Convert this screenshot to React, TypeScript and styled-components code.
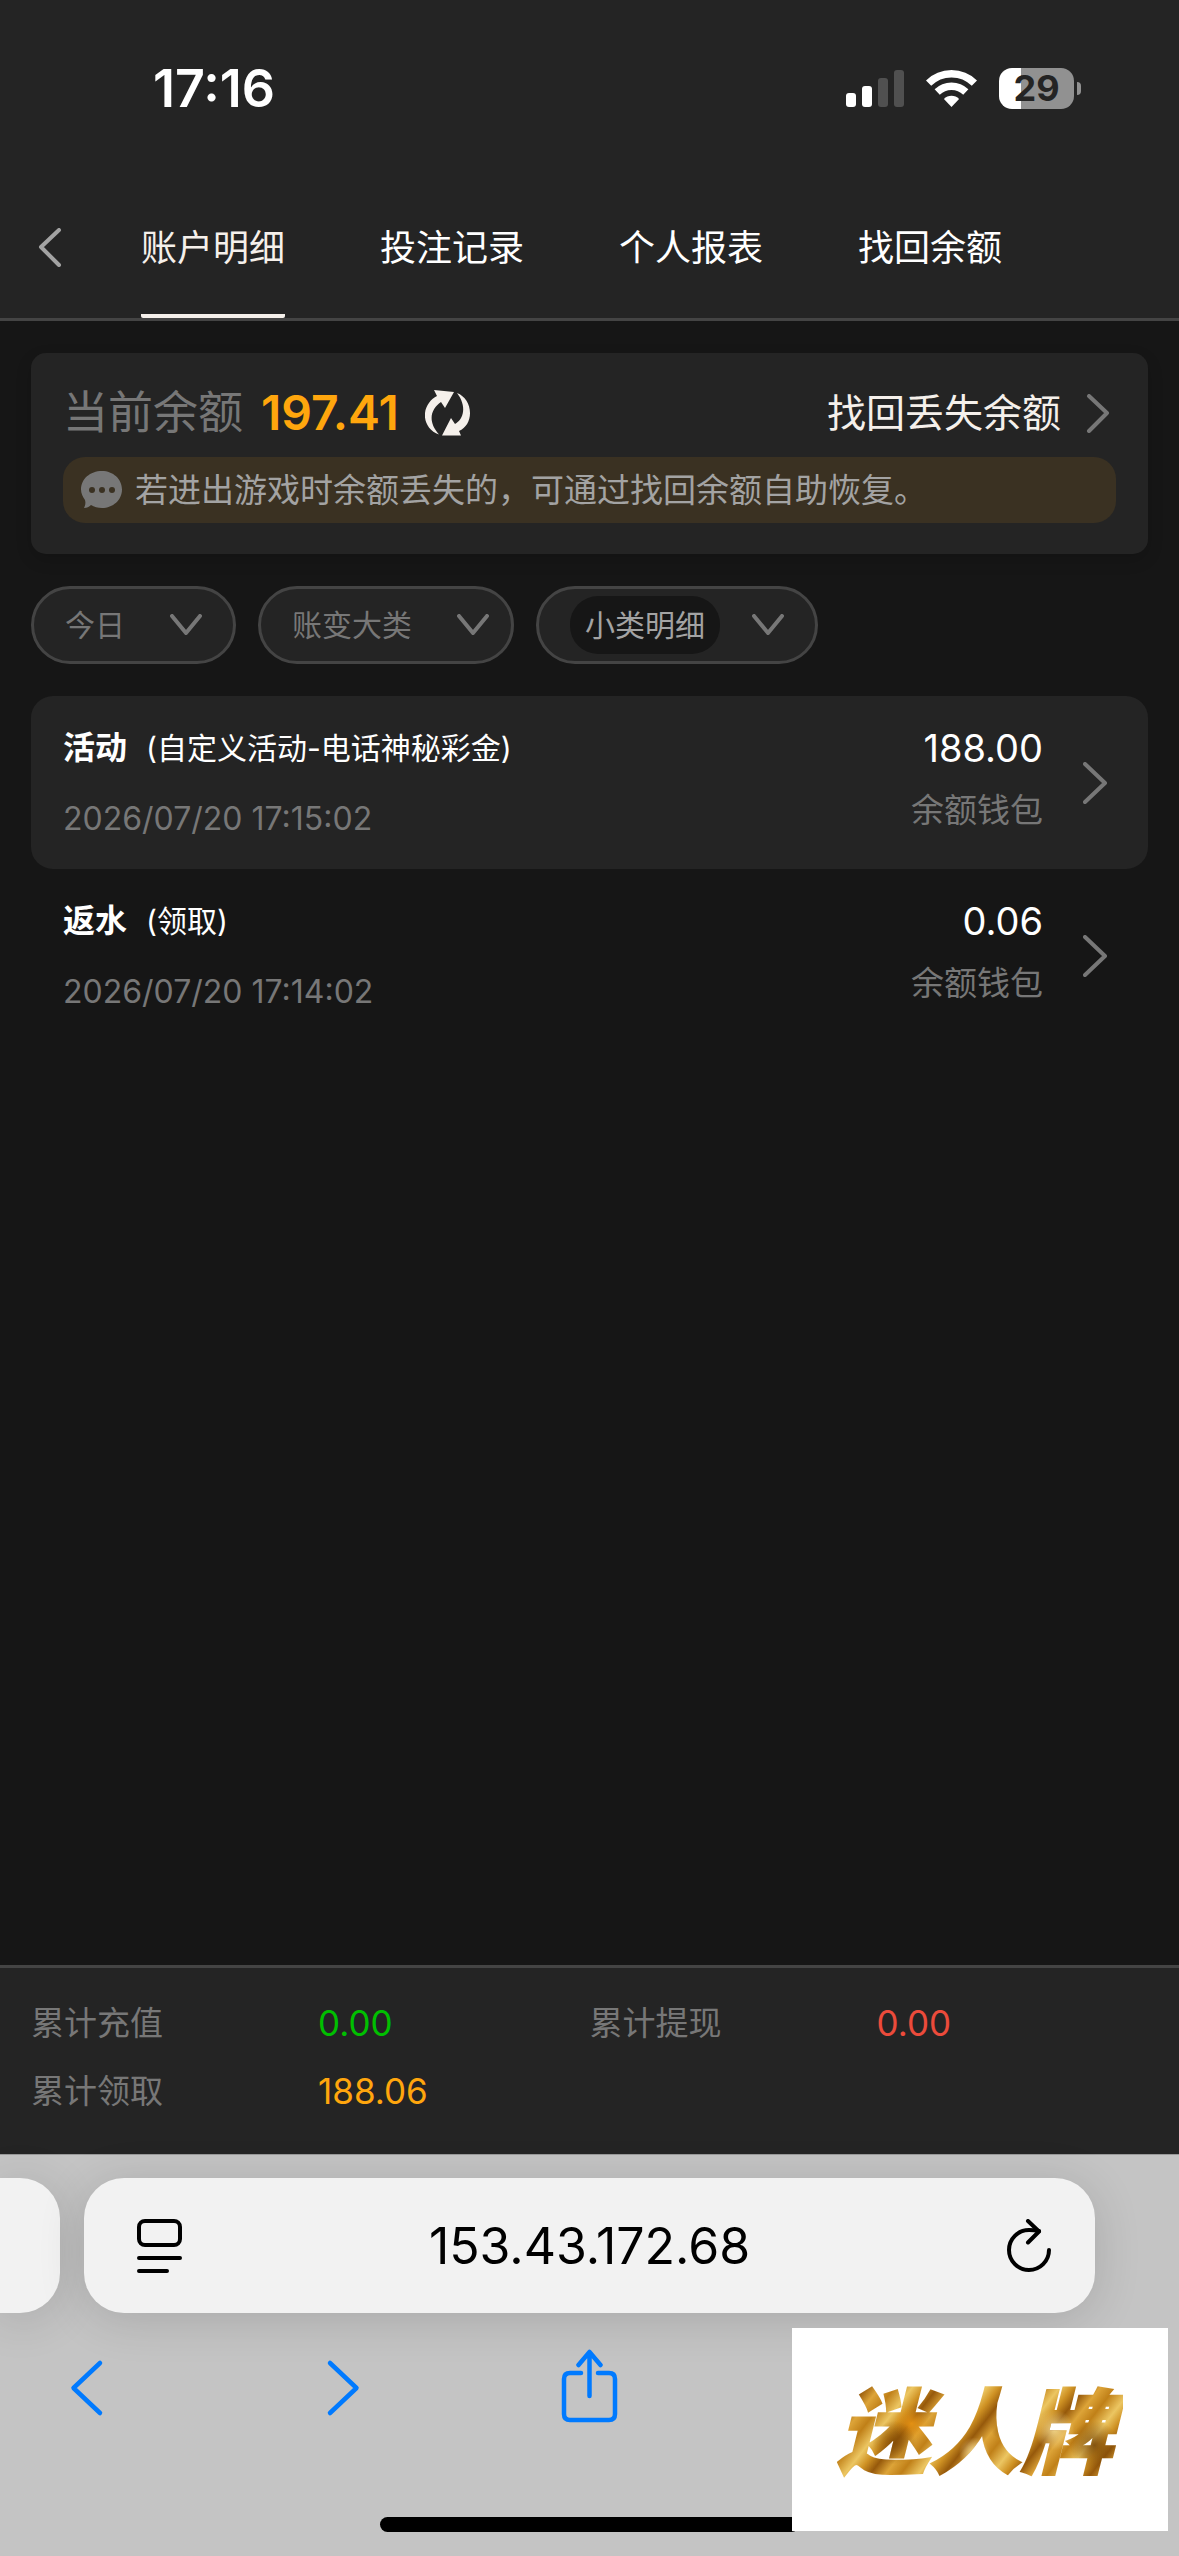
import { useState } from 'react';
import styled, { createGlobalStyle } from 'styled-components';

const GlobalStyle = createGlobalStyle`
  * {
    box-sizing: border-box;
  }

  body {
    margin: 0;
    background: #161616;
    color: #fff;
    font-family: Inter, 'Noto Sans CJK SC', sans-serif;
  }

  button, input, select {
    margin: 0;
    padding: 0;
    border: 0;
    background: none;
    color: inherit;
    font: inherit;
  }

  svg {
    display: block;
    flex-shrink: 0;
  }
`;

const Page = styled.div`
  position: relative;
  display: flex;
  flex-direction: column;
  min-height: 100vh;
  overflow: hidden;
`;

const StatusBar = styled.div`
  display: flex;
  justify-content: space-between;
  align-items: center;
  height: 177px;
  padding: 0 98px 0 153px;
  background: #242424;
`;

const Clock = styled.span`
  font-size: 52px;
  font-weight: 600;
  line-height: 64px;
`;

const StatusIcons = styled.div`
  display: flex;
  align-items: center;
  gap: 22px;
`;

const Battery = styled.div`
  display: flex;
  align-items: center;
  gap: 3px;
`;

const BatteryBody = styled.div<{ $level: number }>`
  width: 75px;
  border-radius: 13px;
  background: linear-gradient(
    90deg,
    #fff ${(props) => props.$level}%,
    #919191 ${(props) => props.$level}%
  );
  color: #242424;
  font-size: 36px;
  font-weight: 700;
  line-height: 41px;
  text-align: center;
`;

const BatteryCap = styled.div`
  width: 4px;
  height: 13px;
  border-radius: 0 4px 4px 0;
  background: #919191;
`;

const Header = styled.header`
  display: flex;
  height: 144px;
  padding-left: 38px;
  border-bottom: 3px solid #444;
  background: #242424;
`;

const BackButton = styled.button`
  width: 103px;
`;

const Tabs = styled.nav`
  display: flex;
  gap: 95px;
`;

const Tab = styled.a<{ $active: boolean }>`
  display: flex;
  align-items: center;
  padding-top: 4px;
  border-bottom: 4px solid ${(props) => (props.$active ? '#f5f0eb' : 'transparent')};
  border-radius: 2px;
  color: ${(props) => (props.$active ? '#f5f0eb' : '#fff')};
  font-size: 36px;
  line-height: 48px;
  text-decoration: none;
`;

const Main = styled.main`
  display: flex;
  flex: 1;
  flex-direction: column;
  gap: 32px;
  padding: 32px 31px;
`;

const BalanceCard = styled.section`
  padding: 16px 32px 31px;
  border-radius: 15px;
  background: #242424;
  box-shadow: 0 6px 16px rgba(0, 0, 0, 0.15);
`;

const BalanceRow = styled.div`
  display: flex;
  align-items: center;
  height: 88px;
`;

const BalanceLabel = styled.span`
  color: #777;
  font-size: 45px;
  line-height: 64px;
`;

const BalanceValue = styled.strong`
  margin: 0 26px 0 18px;
  color: #ffa60d;
  font-size: 48px;
  font-weight: 600;
  line-height: 64px;
`;

const RecoverLink = styled.a`
  display: flex;
  align-items: center;
  gap: 25px;
  margin-left: auto;
  padding-right: 6px;
  color: #f5f0eb;
  font-size: 39px;
  line-height: 64px;
  text-decoration: none;
`;

const Notice = styled.p`
  display: flex;
  align-items: center;
  gap: 12px;
  margin: 0;
  padding: 0 18px;
  border-radius: 22px;
  background: #3a3122;
  color: #a3a3a3;
  font-size: 33px;
  line-height: 66px;
`;

const Filters = styled.div`
  display: flex;
  gap: 22px;
`;

const Filter = styled.label<{ $width: number }>`
  display: flex;
  align-items: center;
  width: ${(props) => props.$width}px;
  height: 78px;
  padding-left: 31px;
  border: 3px solid #444;
  border-radius: 39px;
  background: #242424;
`;

const FilterSelect = styled.select<{ $filled?: boolean }>`
  appearance: none;
  height: 58px;
  margin-right: ${(props) => (props.$filled ? 32 : 45)}px;
  padding: ${(props) => (props.$filled ? '0 15px' : '0')};
  border-radius: 28px;
  background: ${(props) => (props.$filled ? '#161616' : 'transparent')};
  color: ${(props) => (props.$filled ? '#a3a3a3' : '#777')};
  font-size: 30px;
  line-height: 58px;
`;

const Records = styled.ul`
  margin: 0;
  padding: 0;
  list-style: none;
`;

const RecordButton = styled.button`
  display: flex;
  align-items: center;
  width: 100%;
  height: 173px;
  padding: 0 40px 0 32px;
  border-radius: 22px;
  text-align: left;

  li:nth-child(odd) > & {
    background: #242424;
  }
`;

const RecordInfo = styled.div`
  flex: 1;
  height: 134px;
`;

const RecordTitle = styled.div`
  display: flex;
  gap: 19px;
  font-size: 30px;
  line-height: 64px;

  strong {
    font-size: 32px;
    font-weight: 700;
  }
`;

const RecordTime = styled.time`
  display: block;
  padding-top: 12px;
  color: #777;
  font-size: 32px;
  line-height: 54px;
`;

const RecordSum = styled.div`
  height: 134px;
  margin-right: 40px;
  font-size: 38px;
  line-height: 64px;
  text-align: right;
`;

const Wallet = styled.div`
  padding-top: 3px;
  color: #777;
  font-size: 33px;
  line-height: 54px;
`;

const Totals = styled.dl`
  display: grid;
  grid-template-columns: 1fr 1fr;
  margin: 0;
  padding: 21px 31px 29px;
  border-top: 3px solid #444;
  background: #242424;
`;

const Total = styled.div`
  display: flex;
  line-height: 68px;
`;

const TotalLabel = styled.dt`
  width: 287px;
  color: #777;
  font-size: 33px;
`;

const TotalValue = styled.dd<{ $color: string }>`
  margin: 0;
  color: ${(props) => props.$color};
  font-size: 35px;
`;

const BrowserChrome = styled.footer`
  height: 402px;
  padding-top: 23px;
  border-top: 1px solid #999;
  background: #c4c4c4;
`;

const AddressRow = styled.div`
  display: flex;
  gap: 24px;
  height: 135px;
  padding-right: 84px;
`;

const PreviousPage = styled.div`
  width: 60px;
  border-radius: 0 40px 40px 0;
  background: #f2f2f2;
  box-shadow: 0 6px 48px rgba(0, 0, 0, 0.14);
`;

const AddressBar = styled.div`
  display: flex;
  flex: 1;
  align-items: center;
  padding: 0 44px 0 53px;
  border-radius: 40px;
  background: #f2f2f2;
  box-shadow: 0 6px 48px rgba(0, 0, 0, 0.14);
`;

const AddressInput = styled.input`
  flex: 1;
  min-width: 0;
  padding-right: 10px;
  color: #000;
  font-size: 50px;
  line-height: 64px;
  text-align: center;
`;

const Toolbar = styled.nav`
  display: flex;
  gap: 186px;
  padding: 36px 0 0 58px;
`;

const ToolbarButton = styled.button`
  width: 64px;
  height: 76px;
`;

const HomeIndicator = styled.div`
  width: 419px;
  height: 15px;
  margin: 92px auto 0;
  border-radius: 8px;
  background: #000;
`;

const Watermark = styled.div`
  position: absolute;
  right: 11px;
  bottom: 25px;
  display: flex;
  justify-content: center;
  align-items: center;
  width: 376px;
  height: 203px;
  background: #fff;
`;

const WatermarkText = styled.span`
  padding: 6px 10px 0 0;
  background:
    radial-gradient(circle at 20% 60%, rgba(130, 76, 6, 0.8), transparent 9%),
    radial-gradient(circle at 26% 45%, rgba(235, 150, 20, 0.9), transparent 8%),
    radial-gradient(circle at 48% 68%, rgba(250, 228, 160, 0.9), transparent 9%),
    radial-gradient(circle at 58% 48%, rgba(140, 84, 8, 0.7), transparent 7%),
    radial-gradient(circle at 90% 62%, rgba(110, 62, 4, 0.8), transparent 9%),
    radial-gradient(circle at 76% 50%, rgba(248, 222, 146, 0.9), transparent 9%),
    repeating-linear-gradient(
      128deg,
      #c08018 0,
      #ecc662 14px,
      #cf9224 24px,
      #96590b 34px,
      #dda438 46px,
      #c08018 58px
    );
  background-clip: text;
  color: transparent;
  font-size: 92px;
  font-style: italic;
  font-weight: 900;
  line-height: 120px;
  -webkit-text-stroke: 2px transparent;
`;

interface ChevronProps {
  width: number;
  height: number;
  points: string;
  color?: string;
}

const Chevron = ({ width, height, points, color = '#777' }: ChevronProps) => (
  <svg width={width} height={height} viewBox={`0 0 ${width} ${height}`} fill="none">
    <polyline
      points={points}
      stroke={color}
      strokeWidth="4"
      strokeLinecap="round"
      strokeLinejoin="round"
    />
  </svg>
);

const SignalIcon = () => (
  <svg width="58" height="37" viewBox="0 0 58 37" fill="#fff">
    <rect y="23" width="10" height="14" rx="3" />
    <rect x="16" y="16" width="10" height="21" rx="3" />
    <rect x="32" y="8" width="10" height="29" rx="3" fill="#505050" />
    <rect x="48" width="10" height="37" rx="3" fill="#505050" />
  </svg>
);

const WifiIcon = () => (
  <svg width="51" height="37" viewBox="0 0 51 37" fill="none" stroke="#fff">
    <path d="M2.6 13.2a32.5 32.5 0 0 1 45.8 0" strokeWidth="7.4" />
    <path d="M11.2 22a20.5 20.5 0 0 1 28.6 0" strokeWidth="7.4" />
    <path d="M25.5 37l-7.6-8a10.6 10.6 0 0 1 15.2 0z" fill="#fff" stroke="none" />
  </svg>
);

const RefreshIcon = () => (
  <svg width="46" height="46" viewBox="0 0 46 46" fill="#f5f0eb">
    <path d="M9 0l20 2-9 16-4-6C6 19 2 31 14 44.500 4 41-1 32 0 23 1 15 6 9 12 6z" />
    <path d="M36 45.500H17L26 28l4 6C39 29 42 16 32 3c8 3 13 11 13 20 0 8-4 15-11 18z" />
  </svg>
);

const MessageIcon = () => (
  <svg width="42" height="38" viewBox="0 0 42 38">
    <path
      d="M21 0C32 0 41 8 41 18.500S32 37 21 37c-4 0-8-1-11-3-2 2-4 3-7 3 1-2 2-5 1-8-2-3-4-6-4-10.500C0 8 9 0 21 0z"
      fill="#777"
    />
    <g fill="#3a3122">
      <circle cx="11" cy="19" r="3" />
      <circle cx="21" cy="19" r="3" />
      <circle cx="31" cy="19" r="3" />
    </g>
  </svg>
);

const PageMenuIcon = () => (
  <svg width="45" height="54" viewBox="0 0 45 54" fill="none" stroke="#000" strokeWidth="4">
    <rect x="2" y="2" width="41" height="24" rx="6" />
    <path d="M2 39h41M2 52h28" strokeLinecap="round" />
  </svg>
);

const ReloadIcon = () => (
  <svg
    width="44"
    height="54"
    viewBox="0 0 44 54"
    fill="none"
    stroke="#000"
    strokeWidth="4"
    strokeLinecap="round"
    strokeLinejoin="round"
  >
    <path d="M42 31a20 20 0 1 1-20-20q5 0 10 1" />
    <path d="M21 2l11 10.500-11 11" />
  </svg>
);

const ToolbarIcon = ({ d }: { d: string }) => (
  <svg
    width="64"
    height="76"
    viewBox="0 0 64 76"
    fill="none"
    stroke="#007aff"
    strokeWidth="4.5"
    strokeLinecap="round"
    strokeLinejoin="round"
  >
    <path d={d} />
  </svg>
);

const tabs = ['账户明细', '投注记录', '个人报表', '找回余额'];

const filters = [
  { name: '今日', width: 205 },
  { name: '账变大类', width: 256 },
  { name: '小类明细', width: 282, filled: true },
];

const records = [
  {
    type: '活动',
    detail: '(自定义活动-电话神秘彩金)',
    time: '2026/07/20 17:15:02',
    amount: '188.00',
  },
  { type: '返水', detail: '(领取)', time: '2026/07/20 17:14:02', amount: '0.06' },
];

const totals = [
  { label: '累计充值', value: '0.00', color: '#00c000' },
  { label: '累计提现', value: '0.00', color: '#ec4b3b' },
  { label: '累计领取', value: '188.06', color: '#ffa60d' },
];

const toolbar = [
  { label: '后退', d: 'M42 14L15.500 39 42 64' },
  { label: '前进', d: 'M22 14L48.500 39 22 64' },
  { label: '分享', d: 'M23 24H12q-6 0-6 6v35q0 6 6 6h39q6 0 6-6V30q0-6-6-6H40M31.500 47V4M20.500 16L31.500 3l11 13' },
];

const App = () => {
  const [activeTab, setActiveTab] = useState(tabs[0]);

  return (
    <Page>
      <GlobalStyle />
      <StatusBar>
        <Clock>17:16</Clock>
        <StatusIcons>
          <SignalIcon />
          <WifiIcon />
          <Battery>
            <BatteryBody $level={29}>29</BatteryBody>
            <BatteryCap />
          </Battery>
        </StatusIcons>
      </StatusBar>

      <Header>
        <BackButton aria-label="返回">
          <Chevron width={24} height={39} points="21,2 3,19 21,37" color="#a3a3a3" />
        </BackButton>
        <Tabs>
          {tabs.map((tab) => (
            <Tab key={tab} href="#" $active={tab === activeTab} onClick={() => setActiveTab(tab)}>
              {tab}
            </Tab>
          ))}
        </Tabs>
      </Header>

      <Main>
        <BalanceCard>
          <BalanceRow>
            <BalanceLabel>当前余额</BalanceLabel>
            <BalanceValue>197.41</BalanceValue>
            <button aria-label="刷新">
              <RefreshIcon />
            </button>
            <RecoverLink href="#">
              找回丢失余额
              <Chevron width={24} height={39} points="3,2 21,19 3,37" />
            </RecoverLink>
          </BalanceRow>
          <Notice>
            <MessageIcon />
            若进出游戏时余额丢失的，可通过找回余额自助恢复。
          </Notice>
        </BalanceCard>

        <Filters>
          {filters.map(({ name, width, filled }) => (
            <Filter key={name} $width={width}>
              <FilterSelect $filled={filled} aria-label={name}>
                <option>{name}</option>
              </FilterSelect>
              <Chevron width={32} height={22} points="2,2 16,19 30,2" />
            </Filter>
          ))}
        </Filters>

        <Records>
          {records.map((record) => (
            <li key={record.time}>
              <RecordButton>
                <RecordInfo>
                  <RecordTitle>
                    <strong>{record.type}</strong>
                    {record.detail}
                  </RecordTitle>
                  <RecordTime>{record.time}</RecordTime>
                </RecordInfo>
                <RecordSum>
                  {record.amount}
                  <Wallet>余额钱包</Wallet>
                </RecordSum>
                <Chevron width={25} height={42} points="2,2 22,21 2,40" />
              </RecordButton>
            </li>
          ))}
        </Records>
      </Main>

      <Totals>
        {totals.map(({ label, value, color }) => (
          <Total key={label}>
            <TotalLabel>{label}</TotalLabel>
            <TotalValue $color={color}>{value}</TotalValue>
          </Total>
        ))}
      </Totals>

      <BrowserChrome>
        <AddressRow>
          <PreviousPage />
          <AddressBar>
            <button aria-label="页面菜单">
              <PageMenuIcon />
            </button>
            <AddressInput aria-label="地址" defaultValue="153.43.172.68" />
            <button aria-label="重新载入">
              <ReloadIcon />
            </button>
          </AddressBar>
        </AddressRow>
        <Toolbar>
          {toolbar.map(({ label, d }) => (
            <ToolbarButton key={label} aria-label={label}>
              <ToolbarIcon d={d} />
            </ToolbarButton>
          ))}
        </Toolbar>
        <HomeIndicator />
      </BrowserChrome>

      <Watermark>
        <WatermarkText>迷人牌</WatermarkText>
      </Watermark>
    </Page>
  );
};

export default App;
